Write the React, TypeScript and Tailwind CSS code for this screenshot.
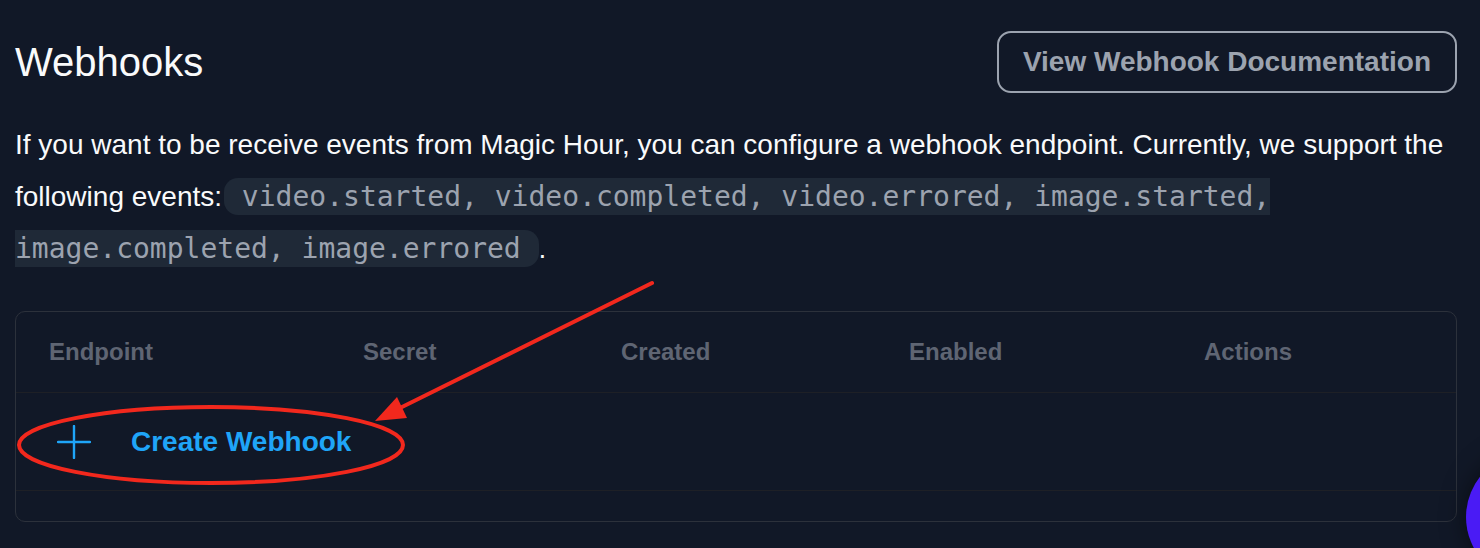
import React from 'react';

// Webhooks settings panel (dark)

const columns = [
    { label: 'Endpoint' },
    { label: 'Secret' },
    { label: 'Created' },
    { label: 'Enabled' },
    { label: 'Actions' },
];

const events = 'video.started, video.completed, video.errored, image.started, image.completed, image.errored';

const PlusGlyph = () => (
    <svg width="34" height="34" viewBox="0 0 34 34" fill="none" className="shrink-0">
        <path d="M17 1v32M1 17h32" stroke="#1fa5f8" strokeWidth="2.4" strokeLinecap="round" />
    </svg>
);

// red markup drawn over the screenshot
const Annotations = () => (
    <svg className="absolute inset-0 pointer-events-none" width="1480" height="548" viewBox="0 0 1480 548">
        <line x1="652" y1="283" x2="400" y2="408" stroke="#f2281d" strokeWidth="4" strokeLinecap="round" />
        <polygon points="375,421 407,418 397,397" fill="#f2281d" />
        <ellipse cx="211" cy="445" rx="192" ry="38" fill="none" stroke="#f2281d" strokeWidth="4" />
    </svg>
);

export default function App() {
    return (
        <div className="relative w-full h-[548px] overflow-hidden bg-[#111827] font-['Liberation_Sans',Arial,sans-serif]">
            <div className="pl-[15px] pr-[23px] pt-[31px]">
                {/* Header */}
                <div className="flex items-center justify-between">
                    <h1 className="text-[40px] leading-[48px] text-gray-50">Webhooks</h1>
                    <button className="h-[62px] px-6 rounded-[14px] border-2 border-[#9ca3af] text-[28px] font-bold text-[#9ca3af]">
                        View Webhook Documentation
                    </button>
                </div>

                {/* Description */}
                <p className="mt-[26px] text-[28px] leading-[52px] text-gray-50">
                    If you want to be receive events from Magic Hour, you can configure a webhook endpoint. Currently, we support the
                    following events:<code className="ml-[2px] px-[1px] py-[2px] rounded-[14px] bg-[#1f2937] text-[#9ca3af] font-['DejaVu_Sans_Mono',monospace] text-[28px]">{' ' + events + ' '}</code>.
                </p>

                {/* Table */}
                <div className="mt-[36px] rounded-[10px] border border-[#2c313b] overflow-hidden">
                    <div className="grid grid-cols-[314px_258px_288px_295px_1fr] h-[81px] items-center border-b border-[#1e2026]">
                        {columns.map(col => (
                            <div key={col.label} className="pl-[33px] text-[24px] leading-[32px] font-bold text-[#5f6573]">
                                {col.label}
                            </div>
                        ))}
                    </div>
                    <div className="h-[98px] flex items-center border-b border-[#1e2026]">
                        <button className="flex items-center gap-[40px] pl-[41px] text-[28px] font-bold text-[#1fa5f8]">
                            <PlusGlyph />
                            Create Webhook
                        </button>
                    </div>
                    <div className="h-[30px]" />
                </div>
            </div>

            <Annotations />

            {/* floating chat bubble */}
            <div className="absolute left-[1466px] top-[452px] w-[130px] h-[130px] rounded-full bg-[#4a1bf5] shadow-[0_0_24px_rgba(0,0,0,0.5)]" />
        </div>
    );
}
